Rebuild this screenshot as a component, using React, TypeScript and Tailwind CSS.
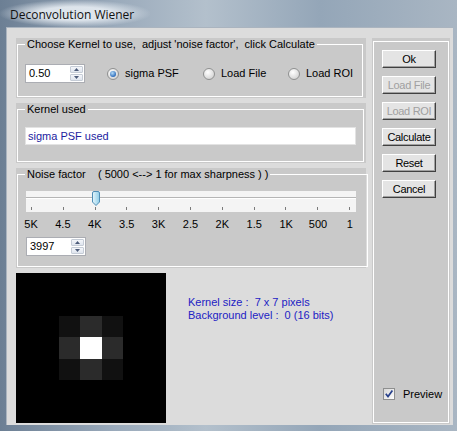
import React from 'react';

const kernel = [
    [0, 0, 0, 0, 0, 0, 0],
    [0, 0, 0, 0, 0, 0, 0],
    [0, 0, 17, 43, 17, 0, 0],
    [0, 0, 43, 255, 43, 0, 0],
    [0, 0, 17, 43, 17, 0, 0],
    [0, 0, 0, 0, 0, 0, 0],
    [0, 0, 0, 0, 0, 0, 0],
];

const ticks = ['5K', '4.5', '4K', '3.5', '3K', '2.5', '2K', '1.5', '1K', '500', '1'];

function SpinBox({ value }: { value: string }) {
    return (
        <div className="flex h-[19px] w-[60px] items-stretch border border-[#abadb3] bg-white">
            <span className="flex-1 pl-[3px] leading-[17px] text-black">{value}</span>
            <div className="my-[1px] mr-[1px] flex w-[13px] flex-col gap-[1px]">
                {[0, 1].map((i) => (
                    <div key={i} className="flex flex-1 items-center justify-center rounded-[1px] border border-[#c5ccd6] bg-gradient-to-b from-[#f4f6fa] to-[#dfe5ee]">
                        <svg width="5" height="3" viewBox="0 0 5 3">
                            <path d={i === 0 ? 'M0 3 L2.5 0 L5 3 Z' : 'M0 0 L2.5 3 L5 0 Z'} fill="#4d5c7a" />
                        </svg>
                    </div>
                ))}
            </div>
        </div>
    );
}

function Radio({ id, label, checked, className }: { id: string; label: string; checked?: boolean; className: string }) {
    return (
        <div className={`flex items-center gap-[6px] ${className}`}>
            <svg width="12" height="12" viewBox="0 0 12 12">
                <defs>
                    <radialGradient id={`rg${id}`} cx="0.4" cy="0.35" r="0.7">
                        <stop offset="0" stopColor="#ffffff" />
                        <stop offset="1" stopColor="#d0d0d0" />
                    </radialGradient>
                    <radialGradient id={`rd${id}`} cx="0.4" cy="0.35" r="0.7">
                        <stop offset="0" stopColor="#b5dcf8" />
                        <stop offset="1" stopColor="#1c5fb4" />
                    </radialGradient>
                </defs>
                <circle cx="6" cy="6" r="5.5" fill={`url(#rg${id})`} stroke="#8e8f8f" />
                {checked && <circle cx="6" cy="6" r="3" fill={`url(#rd${id})`} />}
            </svg>
            <span>{label}</span>
        </div>
    );
}

function Button({ label, disabled }: { label: string; disabled?: boolean }) {
    return (
        <div
            className={`flex h-[18px] w-[54px] items-center justify-center whitespace-nowrap border border-t-white border-l-white border-r-[#404040] border-b-[#404040] bg-[#e4e4e4] tracking-[-0.3px] shadow-[inset_-1px_-1px_0_#a0a0a0] ${
                disabled ? 'text-[#a0a0a0]' : 'text-black'
            }`}
        >
            {label}
        </div>
    );
}

function Group({ title, className, children }: { title: string; className: string; children: React.ReactNode }) {
    return (
        <div className={`bg-[#c9c9c9] pb-[1px] pl-[1px] pr-[3px] ${className}`}>
            <fieldset className="h-full border border-white px-[7px]">
                <legend className="ml-0 whitespace-pre px-[2px] leading-[13px]">{title}</legend>
                {children}
            </fieldset>
        </div>
    );
}

export default function App() {
    return (
        <div
            className="flex h-[431px] w-[457px] flex-col bg-[linear-gradient(90deg,#6c7f94_0%,#9aaabb_25%,#b3c0cc_45%,#94a6b8_70%,#a9b6c3_100%)] text-[11px] text-black"
            style={{ fontFamily: '"Liberation Sans", Arial, sans-serif' }}
        >
            {/* Title bar */}
            <div className="relative h-[27px] shrink-0">
                <div className="absolute left-[0px] top-[0px] h-[27px] w-[150px] bg-[radial-gradient(ellipse_at_center,rgba(230,236,242,0.9)_35%,rgba(230,236,242,0)_72%)]" />
                <span className="absolute left-[10px] top-[6px] text-[12px] text-[#111]" style={{ fontFamily: '"Open Sans", "Liberation Sans", sans-serif' }}>
                    Deconvolution Wiener
                </span>
            </div>

            {/* Client area */}
            <div className="mb-[6px] ml-[6px] mr-[4px] flex flex-1 gap-[6px] border-l border-t border-[#aab4bf] bg-[#dcdcdc] pb-[1px] pl-[9px] pr-[2px] pt-[10px]">
                {/* Left column */}
                <div className="flex w-[350px] flex-col gap-[5px]">
                    <Group title="Choose Kernel to use,  adjust 'noise factor',  click Calculate" className="h-[60px]">
                        <div className="mt-[13px] flex items-center">
                            <SpinBox value="0.50" />
                            <Radio id="a" label="sigma PSF" checked className="ml-[22px] w-[96px]" />
                            <Radio id="b" label="Load File" className="w-[85px]" />
                            <Radio id="c" label="Load ROI" className="" />
                        </div>
                    </Group>

                    <Group title="Kernel used" className="h-[60px]">
                        <div className="mt-[11px] flex h-[18px] w-[331px] items-center border border-[#e3e3e3] bg-white pl-[2px] text-[#1c1ca0]">
                            sigma PSF used
                        </div>
                    </Group>

                    <Group title="Noise factor    ( 5000 <--> 1 for max sharpness ) )" className="h-[100px]">
                        <div className="ml-[1px] mt-[10px] h-[21px] w-[330px] bg-[#f4f4f4] pl-[5px] pr-[6px]">
                            <div className="relative h-full">
                                <div className="absolute left-[-5px] right-[-6px] top-[6px] h-[1px] bg-[#b5b5b5]" />
                                <div className="absolute left-[-5px] right-[-6px] top-[7px] h-[1px] bg-white" />
                                <svg className="absolute left-[61px] top-[0px]" width="8" height="15" viewBox="0 0 8 15">
                                    <defs>
                                        <linearGradient id="thumb" x1="0" y1="0" x2="1" y2="0">
                                            <stop offset="0" stopColor="#e6f6fc" />
                                            <stop offset="1" stopColor="#8fcde8" />
                                        </linearGradient>
                                    </defs>
                                    <path d="M0.5 2 Q0.5 0.5 2 0.5 H6 Q7.5 0.5 7.5 2 V11 L4 14.5 L0.5 11 Z" fill="url(#thumb)" stroke="#4f8db5" />
                                </svg>
                                <div className="absolute bottom-[2px] left-0 right-0 flex justify-between">
                                    {ticks.map((t) => (
                                        <div key={t} className="h-[3px] w-[1px] bg-[#7a7a7a]" />
                                    ))}
                                </div>
                            </div>
                        </div>
                        <div className="ml-[-4px] mt-[6px] flex w-[339px] justify-between">
                            {ticks.map((t) => (
                                <span key={t} className="w-[20px] text-center leading-[13px]">
                                    {t}
                                </span>
                            ))}
                        </div>
                        <div className="ml-[1px] mt-[6px]">
                            <SpinBox value="3997" />
                        </div>
                    </Group>

                    <div className="flex gap-[22px]">
                        <div className="grid h-[150px] w-[150px] grid-cols-7 grid-rows-7 bg-black">
                            {kernel.flat().map((v, i) => (
                                <div key={i} style={{ backgroundColor: `rgb(${v},${v},${v})` }} />
                            ))}
                        </div>
                        <div className="mt-[23px] whitespace-pre leading-[13px] text-[#2222c4]">
                            <div>Kernel size :  7 x 7 pixels</div>
                            <div>Background level :  0 (16 bits)</div>
                        </div>
                    </div>
                </div>

                {/* Right column */}
                <div className="w-[78px] bg-[#c9c9c9] px-[1px] pb-[1px] pt-[3px]">
                    <div className="flex h-full flex-col border border-white pb-[20px] pl-[8px]">
                        <div className="mt-[8px] flex flex-col gap-[8px]">
                            <Button label="Ok" />
                            <Button label="Load File" disabled />
                            <Button label="Load ROI" disabled />
                            <Button label="Calculate" />
                            <Button label="Reset" />
                            <Button label="Cancel" />
                        </div>
                        <div className="mt-auto flex items-center gap-[8px] pl-[1px]">
                            <svg width="12" height="12" viewBox="0 0 12 12">
                                <defs>
                                    <linearGradient id="cb" x1="0" y1="0" x2="1" y2="1">
                                        <stop offset="0" stopColor="#d6d6d6" />
                                        <stop offset="1" stopColor="#ffffff" />
                                    </linearGradient>
                                </defs>
                                <rect x="0.5" y="0.5" width="11" height="11" fill="url(#cb)" stroke="#8e8f8f" />
                                <path d="M2.8 5.8 L5 8.6 L9.4 2.6" fill="none" stroke="#27408b" strokeWidth="1.7" />
                            </svg>
                            <span>Preview</span>
                        </div>
                    </div>
                </div>
            </div>
        </div>
    );
}
